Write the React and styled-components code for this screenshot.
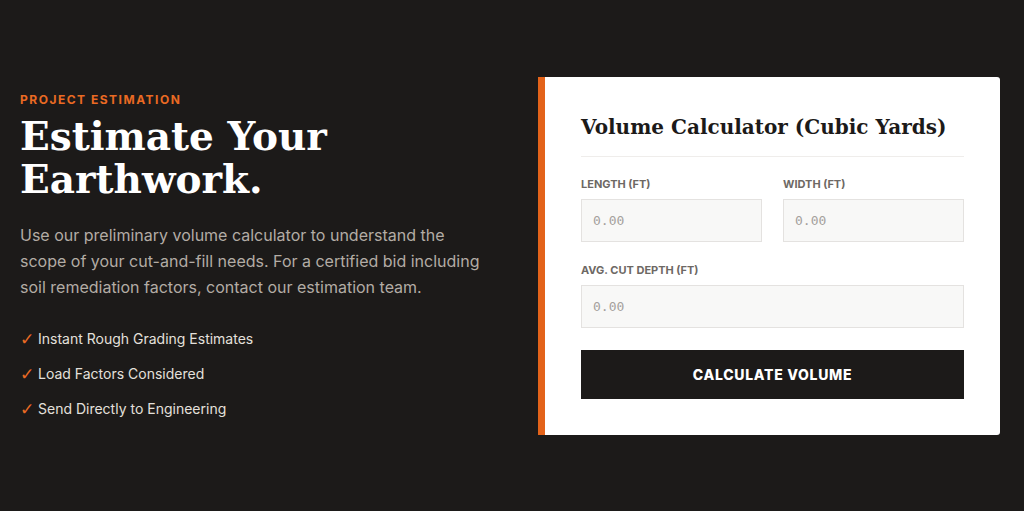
import styled, { createGlobalStyle } from "styled-components";

const GlobalStyle = createGlobalStyle`
  html, body {
    margin: 0;
    padding: 0;
    background: #1c1a19;
  }
  * {
    box-sizing: border-box;
  }
`;

const Section = styled.section`
  height: 511px;
  display: grid;
  grid-template-columns: 1fr 462px;
  align-items: center;
  padding: 0 24px 0 20px;
  background: #1c1a19;
  font-family: Inter, "Liberation Sans", sans-serif;
`;

const Intro = styled.div`
  display: flex;
  flex-direction: column;
`;

const Eyebrow = styled.span`
  color: #ea6a23;
  font-size: 12px;
  font-weight: 700;
  letter-spacing: 1.5px;
  text-transform: uppercase;
  line-height: 14px;
`;

const Heading = styled.h1`
  margin: 8px 0 0;
  color: #ffffff;
  font-family: "DejaVu Serif", "Liberation Serif", serif;
  font-weight: 700;
  font-size: 39px;
  line-height: 43px;
`;

const Lead = styled.p`
  margin: 21px 0 0;
  max-width: 470px;
  color: #b3aca5;
  font-size: 16px;
  line-height: 26px;
`;

const Checklist = styled.ul`
  list-style: none;
  margin: 30px 0 0;
  padding: 0;
  display: flex;
  flex-direction: column;
  gap: 17px;
`;

const CheckItem = styled.li`
  display: flex;
  align-items: center;
  gap: 6px;
  color: #e4e0dc;
  font-size: 14px;
  line-height: 18px;

  &::before {
    content: "✓";
    width: 12px;
    color: #ea6a23;
    font-family: "DejaVu Sans", sans-serif;
    font-size: 17px;
    font-weight: 300;
  }
`;

const Card = styled.div`
  background: #ffffff;
  border-left: 7px solid #e3631a;
  border-radius: 0 3px 3px 0;
  padding: 36px 36px 36px;
`;

const CardTitle = styled.h2`
  margin: 0;
  padding-bottom: 14px;
  border-bottom: 1px solid #efedeb;
  color: #1c1a19;
  font-family: "DejaVu Serif", "Liberation Serif", serif;
  font-weight: 700;
  font-size: 20px;
  line-height: 29px;
`;

const Fields = styled.div`
  margin-top: 21px;
  display: grid;
  grid-template-columns: 1fr 1fr;
  column-gap: 21px;
  row-gap: 22px;
`;

const Field = styled.label`
  display: flex;
  flex-direction: column;
  gap: 8px;
  grid-column: ${(p) => (p.$wide ? "1 / -1" : "auto")};
`;

const FieldLabel = styled.span`
  color: #6d6864;
  font-size: 11px;
  font-weight: 700;
  text-transform: uppercase;
  line-height: 13px;
`;

const Input = styled.input`
  height: 43px;
  width: 100%;
  padding: 0 11px;
  border: 1px solid #e4e2e0;
  background: #f8f8f7;
  font-family: "DejaVu Sans Mono", "Liberation Mono", monospace;
  font-size: 13px;
  color: #1c1a19;
  outline: none;

  &::placeholder {
    color: #a5a19d;
  }
`;

const Submit = styled.button`
  margin-top: 22px;
  width: 100%;
  height: 49px;
  border: 0;
  background: #1c1a19;
  color: #ffffff;
  font-family: Inter, "Liberation Sans", sans-serif;
  font-size: 14px;
  font-weight: 800;
  letter-spacing: 0.7px;
  text-transform: uppercase;
  cursor: pointer;
`;

const features = [
  "Instant Rough Grading Estimates",
  "Load Factors Considered",
  "Send Directly to Engineering",
];

export default function App() {
  return (
    <>
      <GlobalStyle />
      <Section>
        <Intro>
          <Eyebrow>Project Estimation</Eyebrow>
          <Heading>
            Estimate Your
            <br />
            Earthwork.
          </Heading>
          <Lead>
            Use our preliminary volume calculator to understand the scope of
            your cut-and-fill needs. For a certified bid including soil
            remediation factors, contact our estimation team.
          </Lead>
          <Checklist>
            {features.map((f) => (
              <CheckItem key={f}>{f}</CheckItem>
            ))}
          </Checklist>
        </Intro>

        <Card>
          <CardTitle>Volume Calculator (Cubic Yards)</CardTitle>
          <Fields>
            <Field>
              <FieldLabel>Length (ft)</FieldLabel>
              <Input type="number" placeholder="0.00" />
            </Field>
            <Field>
              <FieldLabel>Width (ft)</FieldLabel>
              <Input type="number" placeholder="0.00" />
            </Field>
            <Field $wide>
              <FieldLabel>Avg. Cut Depth (ft)</FieldLabel>
              <Input type="number" placeholder="0.00" />
            </Field>
          </Fields>
          <Submit type="button">Calculate Volume</Submit>
        </Card>
      </Section>
    </>
  );
}
